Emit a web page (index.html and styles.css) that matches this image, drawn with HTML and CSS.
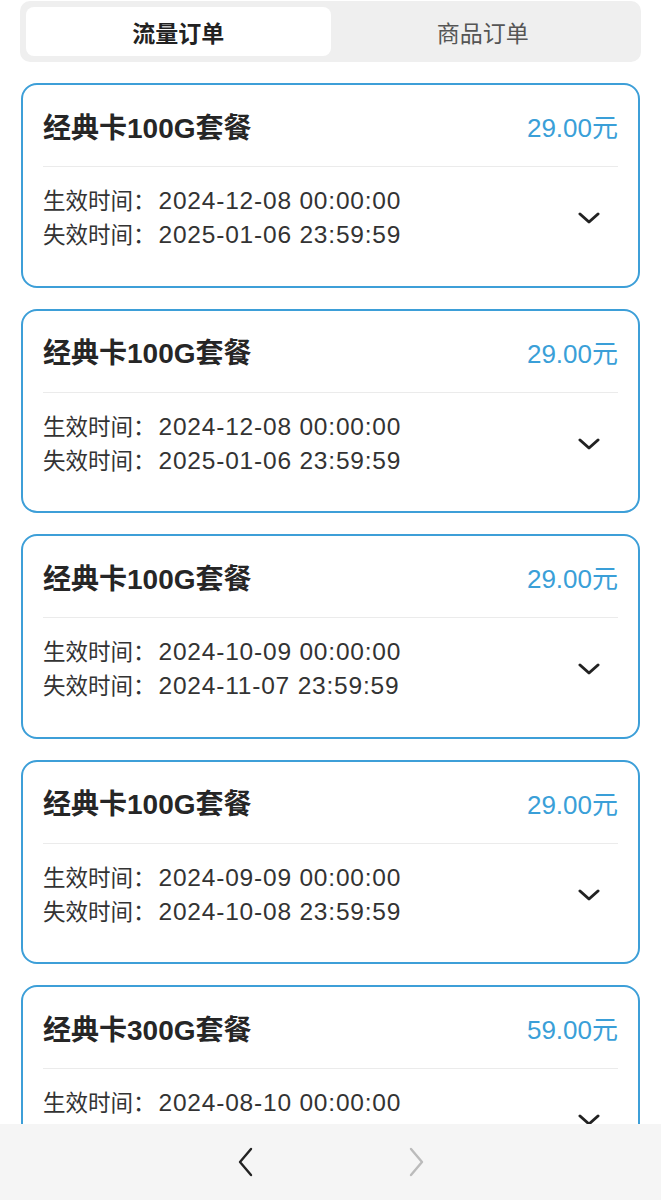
FILE: index.html
```html
<!DOCTYPE html>
<html lang="zh-CN">
<head>
    <meta charset="UTF-8">
    <meta name="viewport" content="width=device-width, initial-scale=1.0">
    <title>我的订单</title>
    <link rel="stylesheet" href="styles.css">
</head>
<body>

<div class="page">
    <div class="tabs">
        <div class="tab active">流量订单</div>
        <div class="tab">商品订单</div>
    </div>

    <div class="order">
        <div class="order-head">
            <div class="order-name">经典卡100G套餐</div>
            <div class="order-price">29.00元</div>
        </div>
        <div class="order-body">
            <div class="order-times">
                <div class="time-row">生效时间：<span class="time-value">2024-12-08 00:00:00</span></div>
                <div class="time-row">失效时间：<span class="time-value">2025-01-06 23:59:59</span></div>
            </div>
            <svg class="arrow" width="22" height="14" viewBox="0 0 22 14"><path d="M2 3 L11 11 L20 3" fill="none" stroke="#222" stroke-width="3" stroke-linecap="round" stroke-linejoin="round"/></svg>
        </div>
    </div>

    <div class="order">
        <div class="order-head">
            <div class="order-name">经典卡100G套餐</div>
            <div class="order-price">29.00元</div>
        </div>
        <div class="order-body">
            <div class="order-times">
                <div class="time-row">生效时间：<span class="time-value">2024-12-08 00:00:00</span></div>
                <div class="time-row">失效时间：<span class="time-value">2025-01-06 23:59:59</span></div>
            </div>
            <svg class="arrow" width="22" height="14" viewBox="0 0 22 14"><path d="M2 3 L11 11 L20 3" fill="none" stroke="#222" stroke-width="3" stroke-linecap="round" stroke-linejoin="round"/></svg>
        </div>
    </div>

    <div class="order">
        <div class="order-head">
            <div class="order-name">经典卡100G套餐</div>
            <div class="order-price">29.00元</div>
        </div>
        <div class="order-body">
            <div class="order-times">
                <div class="time-row">生效时间：<span class="time-value">2024-10-09 00:00:00</span></div>
                <div class="time-row">失效时间：<span class="time-value">2024-11-07 23:59:59</span></div>
            </div>
            <svg class="arrow" width="22" height="14" viewBox="0 0 22 14"><path d="M2 3 L11 11 L20 3" fill="none" stroke="#222" stroke-width="3" stroke-linecap="round" stroke-linejoin="round"/></svg>
        </div>
    </div>

    <div class="order">
        <div class="order-head">
            <div class="order-name">经典卡100G套餐</div>
            <div class="order-price">29.00元</div>
        </div>
        <div class="order-body">
            <div class="order-times">
                <div class="time-row">生效时间：<span class="time-value">2024-09-09 00:00:00</span></div>
                <div class="time-row">失效时间：<span class="time-value">2024-10-08 23:59:59</span></div>
            </div>
            <svg class="arrow" width="22" height="14" viewBox="0 0 22 14"><path d="M2 3 L11 11 L20 3" fill="none" stroke="#222" stroke-width="3" stroke-linecap="round" stroke-linejoin="round"/></svg>
        </div>
    </div>

    <div class="order">
        <div class="order-head">
            <div class="order-name">经典卡300G套餐</div>
            <div class="order-price">59.00元</div>
        </div>
        <div class="order-body">
            <div class="order-times">
                <div class="time-row">生效时间：<span class="time-value">2024-08-10 00:00:00</span></div>
                <div class="time-row">失效时间：<span class="time-value">2024-09-08 23:59:59</span></div>
            </div>
            <svg class="arrow" width="22" height="14" viewBox="0 0 22 14"><path d="M2 3 L11 11 L20 3" fill="none" stroke="#222" stroke-width="3" stroke-linecap="round" stroke-linejoin="round"/></svg>
        </div>
    </div>
</div>

<!-- 浏览器底部导航 -->
<div class="nav-bar">
    <svg class="nav-btn" width="20" height="32" viewBox="0 0 20 32"><path d="M15 3 L4 16 L15 29" fill="none" stroke="#222" stroke-width="2.4" stroke-linecap="round" stroke-linejoin="round"/></svg>
    <svg class="nav-btn" width="20" height="32" viewBox="0 0 20 32"><path d="M5 3 L16 16 L5 29" fill="none" stroke="#bbb" stroke-width="2.4" stroke-linecap="round" stroke-linejoin="round"/></svg>
</div>

</body>
</html>
```

FILE: styles.css
```css
body {
    font-family: "Liberation Sans", "Noto Sans CJK SC", sans-serif;
    background-color: #fff;
    color: #333;
    margin: 0;
    padding: 0;
}
.page {
    padding: 1px 20px 0;
}
.tabs {
    display: flex;
    background: #efefef;
    border-radius: 10px;
    padding: 6px;
    height: 49px;
}
.tab {
    flex: 1;
    display: flex;
    align-items: center;
    justify-content: center;
    font-size: 23px;
    color: #555;
    border-radius: 8px;
}
.tab.active {
    background: #fff;
    color: #222;
    font-weight: bold;
}
.order {
    margin: 21px 1px 0;
    border: 2px solid #3d9fd8;
    border-radius: 16px;
    padding: 0 20px;
    height: 200.5px;
}
.order-head {
    display: flex;
    align-items: center;
    justify-content: space-between;
    height: 81px;
    border-bottom: 1px solid #ebebeb;
}
.order-name {
    font-size: 28px;
    font-weight: bold;
    color: #262626;
}
.order-price {
    font-size: 26px;
    color: #3a9fd8;
}
.order-body {
    display: flex;
    align-items: center;
    justify-content: space-between;
    padding: 17px 0 0;
}
.time-row {
    font-size: 22.5px;
    line-height: 33px;
    color: #333;
}
.time-value {
    font-size: 24.5px;
    letter-spacing: 0.8px;
    margin-left: 3px;
}
.arrow {
    margin-right: 18px;
}
.nav-bar {
    position: fixed;
    left: 0;
    right: 0;
    bottom: 0;
    height: 76px;
    background: #f5f5f5;
    display: flex;
    justify-content: center;
    align-items: center;
    gap: 150px;
}
```
